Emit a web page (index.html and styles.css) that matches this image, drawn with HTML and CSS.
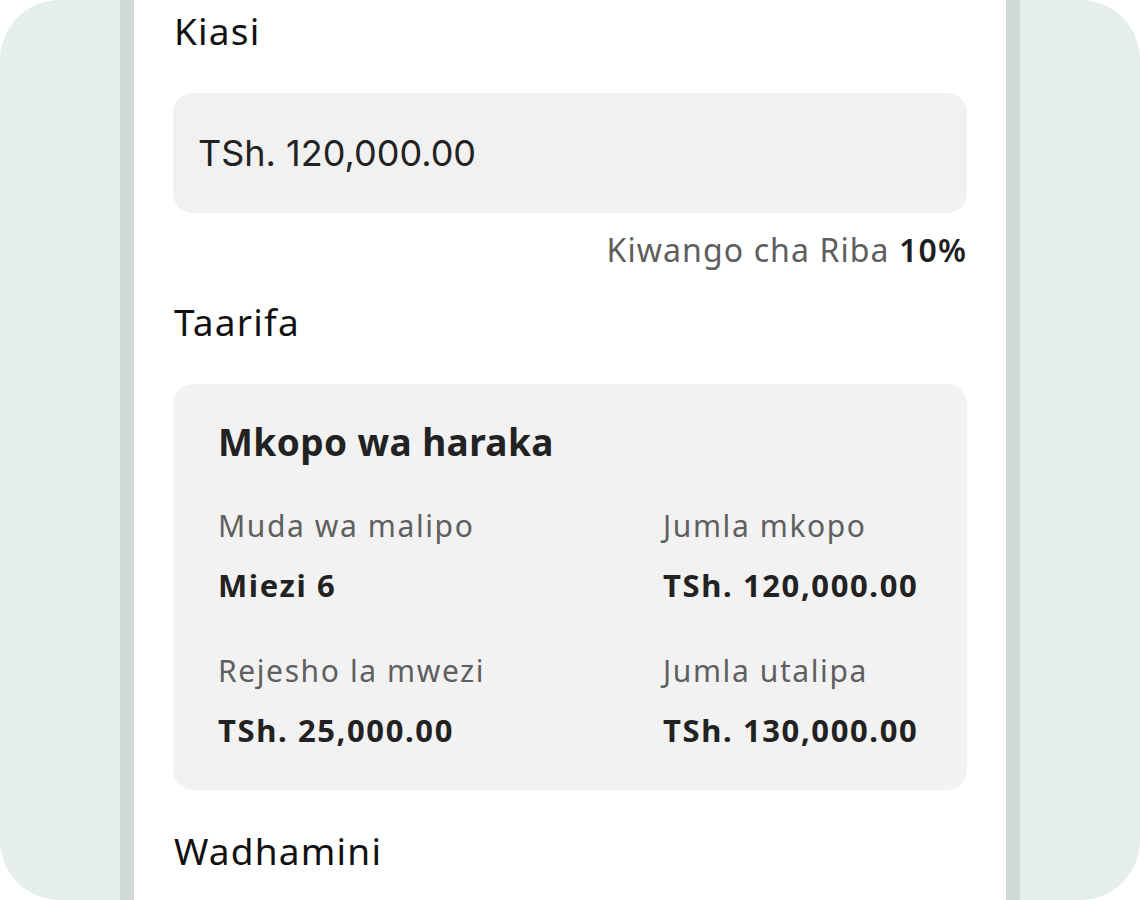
FILE: index.html
```html
<!DOCTYPE html>
<html lang="sw">
<head>
<meta charset="utf-8">
<title>Mkopo</title>
<link rel="stylesheet" href="styles.css">
</head>
<body>
<div class="frame">
  <div class="phone">
    <div class="content">
      <h2 class="section-title first">Kiasi</h2>
      <div class="amount-input">TSh. 120,000.00</div>
      <div class="rate">Kiwango cha Riba <strong>10%</strong></div>
      <h2 class="section-title taarifa">Taarifa</h2>
      <div class="info-card">
        <h3 class="card-title">Mkopo wa haraka</h3>
        <div class="info-grid">
          <div class="item">
            <div class="item-label">Muda wa malipo</div>
            <div class="item-value">Miezi 6</div>
          </div>
          <div class="item">
            <div class="item-label">Jumla mkopo</div>
            <div class="item-value">TSh. 120,000.00</div>
          </div>
          <div class="item">
            <div class="item-label">Rejesho la mwezi</div>
            <div class="item-value">TSh. 25,000.00</div>
          </div>
          <div class="item">
            <div class="item-label">Jumla utalipa</div>
            <div class="item-value">TSh. 130,000.00</div>
          </div>
        </div>
      </div>
      <h2 class="section-title wadhamini">Wadhamini</h2>
    </div>
  </div>
</div>
</body>
</html>
```

FILE: styles.css
```css
* { box-sizing: border-box; }
html, body { margin: 0; padding: 0; background: #ffffff; }
body { font-family: "Noto Sans", "Lato", sans-serif; color: #1f1f1f; }

.frame {
  width: 1140px;
  height: 900px;
  background: #e6eeed;
  border-radius: 60px;
  display: flex;
  justify-content: center;
  overflow: hidden;
}

.phone {
  width: 900px;
  height: 900px;
  background: #ffffff;
  border-left: 14px solid #cfd9d6;
  border-right: 14px solid #cfd9d6;
}

.content {
  padding: 8px 39px 0 39px;
}

.section-title {
  margin: 0;
  font-family: "Noto Sans", "Lato", sans-serif;
  font-weight: 400;
  font-size: 37px;
  line-height: 46px;
  letter-spacing: 1.2px;
  color: #111111;
  padding-left: 1px;
}

.amount-input {
  margin-top: 39px;
  height: 120px;
  background: #f1f1f1;
  border-radius: 20px;
  padding-left: 25px;
  display: flex;
  align-items: center;
  font-family: "Inter", "Noto Sans", sans-serif;
  font-size: 36px;
  color: #222222;
}

.rate {
  margin-top: 16px;
  text-align: right;
  font-size: 32px;
  line-height: 42px;
  letter-spacing: 1.1px;
  color: #5e5e5e;
}
.rate strong { color: #1f1f1f; font-weight: 600; }

.taarifa { margin-top: 28px; }

.info-card {
  margin-top: 39px;
  background: #f2f2f2;
  border-radius: 20px;
  padding: 34px 45px 40px 45px;
}

.card-title {
  margin: 0;
  font-size: 37px;
  line-height: 48px;
  letter-spacing: 0.4px;
  font-weight: 700;
  color: #222222;
}

.info-grid {
  margin-top: 40px;
  display: grid;
  grid-template-columns: 445px 1fr;
  row-gap: 46px;
}

.item-label {
  font-size: 30px;
  line-height: 40px;
  letter-spacing: 1.6px;
  color: #5f5f5f;
}

.item-value {
  margin-top: 19px;
  font-size: 31px;
  line-height: 40px;
  letter-spacing: 1.6px;
  font-weight: 700;
  color: #222222;
}

.wadhamini { margin-top: 38px; }
```
